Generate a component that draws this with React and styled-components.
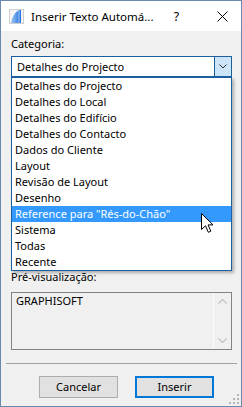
import React from "react";
import styled, { createGlobalStyle } from "styled-components";

const Global = createGlobalStyle`
  html, body { margin: 0; padding: 0; background: #ffffff; }
  body { font-family: "Noto Sans", "Open Sans", sans-serif; font-size: 11px; color: #000; }
  * { box-sizing: border-box; }
`;

const Window = styled.div`
  width: 242px;
  height: 407px;
  border: 1px solid #6b89ad;
  display: flex;
  flex-direction: column;
  position: relative;
  overflow: hidden;
  background: #f0f0f0;
`;

const TitleBar = styled.div`
  height: 30px;
  flex: none;
  background: #ffffff;
  display: flex;
  align-items: center;
`;

const AppIcon = styled.svg`
  margin-left: 8px;
  width: 15px;
  height: 15px;
  flex: none;
`;

const Title = styled.div`
  margin-left: 7px;
  flex: 1;
  font-size: 11.5px;
  white-space: nowrap;
`;

const TitleButton = styled.div`
  width: 46px;
  height: 30px;
  flex: none;
  display: flex;
  align-items: center;
  justify-content: center;
  font-size: 12.5px;
  color: #000;
`;

const Body = styled.div`
  flex: 1;
  position: relative;
  display: flex;
  flex-direction: column;
  padding: 5px 9px 0 10px;
`;

const Label = styled.div`
  line-height: 15px;
  height: 15px;
  margin-top: ${(p) => p.$mt || 0}px;
  white-space: nowrap;
`;

const Combo = styled.div`
  margin-top: 5px;
  height: 21px;
  border: 1px solid #1c5f9e;
  background: #ffffff;
  display: flex;
`;

const ComboText = styled.div`
  flex: 1;
  padding-left: 5px;
  line-height: 19px;
  white-space: nowrap;
`;

const DropButton = styled.div`
  width: 17px;
  flex: none;
  background: #cce4f7;
  border-left: 1px solid #1c5f9e;
  display: flex;
  align-items: center;
  justify-content: center;
`;

const DropList = styled.div`
  position: absolute;
  top: 46px;
  left: 10px;
  width: 221px;
  height: 194px;
  border: 1px solid #1c5f9e;
  background: #ffffff;
  box-shadow: 2px 2px 3px rgba(0, 0, 0, 0.28);
  z-index: 2;
`;

const Item = styled.div`
  height: 16px;
  line-height: 16px;
  padding-left: 3px;
  white-space: nowrap;
  background: ${(p) => (p.$active ? "#3399ff" : "transparent")};
  color: ${(p) => (p.$active ? "#ffffff" : "#000000")};
`;

const Preview = styled.div`
  margin-top: 8px;
  height: 58px;
  border: 1px solid #838383;
  display: flex;
`;

const PreviewText = styled.div`
  flex: 1;
  padding: 0 4px;
  line-height: 15px;
`;

const ScrollBar = styled.div`
  width: 18px;
  flex: none;
  border-left: 1px solid #fbfbfb;
  display: flex;
  flex-direction: column;
  justify-content: space-between;
  align-items: center;
  padding: 6px 0 6px;
`;

const Separator = styled.div`
  margin: 13px -5px 0 -5px;
  height: 1px;
  background: #a0a0a0;
`;

const ButtonRow = styled.div`
  margin-top: 12px;
  padding-left: 28px;
  display: flex;
  gap: 17px;
`;

const Button = styled.div`
  width: 79px;
  height: 22px;
  background: #e1e1e1;
  border: ${(p) => (p.$default ? "2px solid #0078d7" : "1px solid #adadad")};
  display: flex;
  align-items: center;
  justify-content: center;
  line-height: 16px;
`;

const Cursor = styled.svg`
  position: absolute;
  left: 200px;
  top: 212px;
  width: 14px;
  height: 22px;
  z-index: 3;
`;

const Grip = styled.svg`
  position: absolute;
  right: 1px;
  bottom: 1px;
  width: 12px;
  height: 12px;
`;

const items = [
  "Detalhes do Projecto",
  "Detalhes do Local",
  "Detalhes do Edifício",
  "Detalhes do Contacto",
  "Dados do Cliente",
  "Layout",
  "Revisão de Layout",
  "Desenho",
  "Reference para \"Rés-do-Chão\"",
  "Sistema",
  "Todas",
  "Recente",
];

export default function App() {
  return (
    <>
      <Global />
      <Window>
        <TitleBar>
          <AppIcon viewBox="0 0 15 15">
            <defs>
              <linearGradient id="ag" x1="0" y1="0" x2="1" y2="0">
                <stop offset="0" stopColor="#9cc8f5" />
                <stop offset="1" stopColor="#1f6fe0" />
              </linearGradient>
            </defs>
            <rect x="0.5" y="0.5" width="14" height="14" fill="#f4f4f4" stroke="#cfcfcf" />
            <path d="M2 14 C3 8 6 3 10 1 L12 1 L12 14 Z" fill="url(#ag)" />
            <path d="M10 1 L10 14" stroke="#ffffff" strokeWidth="0.8" opacity="0.7" />
          </AppIcon>
          <Title>Inserir Texto Automá...</Title>
          <TitleButton>?</TitleButton>
          <TitleButton>
            <svg width="11" height="11" viewBox="0 0 11 11">
              <path d="M0.5 0.5 L10.5 10.5 M10.5 0.5 L0.5 10.5" stroke="#000" strokeWidth="1" />
            </svg>
          </TitleButton>
        </TitleBar>
        <Body>
          <Label>Categoria:</Label>
          <Combo>
            <ComboText>Detalhes do Projecto</ComboText>
            <DropButton>
              <svg width="8" height="5" viewBox="0 0 8 5">
                <path d="M0.5 0.5 L4 4 L7.5 0.5" stroke="#333" strokeWidth="1" fill="none" />
              </svg>
            </DropButton>
          </Combo>
          <DropList>
            {items.map((t, i) => (
              <Item key={t} $active={i === 8}>{t}</Item>
            ))}
          </DropList>
          <Label $mt={192}>Pré-visualização:</Label>
          <Preview>
            <PreviewText>GRAPHISOFT</PreviewText>
            <ScrollBar>
              <svg width="9" height="5" viewBox="0 0 9 5">
                <path d="M0.5 4.5 L4.5 0.5 L8.5 4.5" stroke="#c2c2c2" strokeWidth="1.2" fill="none" />
              </svg>
              <svg width="9" height="5" viewBox="0 0 9 5">
                <path d="M0.5 0.5 L4.5 4.5 L8.5 0.5" stroke="#c2c2c2" strokeWidth="1.2" fill="none" />
              </svg>
            </ScrollBar>
          </Preview>
          <Separator />
          <ButtonRow>
            <Button>Cancelar</Button>
            <Button $default>Inserir</Button>
          </ButtonRow>
        </Body>
        <Cursor viewBox="0 0 14 22">
          <path
            d="M0.5 0.5 L0.5 16.5 L4.5 12.8 L7.3 19.3 L9.8 18.2 L7.1 11.9 L12 11.9 Z"
            fill="#ffffff"
            stroke="#000000"
            strokeWidth="1"
            strokeLinejoin="miter"
          />
        </Cursor>
        <Grip viewBox="0 0 12 12">
          <rect x="9" y="1" width="2" height="2" fill="#b5b5b5" />
          <rect x="5" y="5" width="2" height="2" fill="#b5b5b5" />
          <rect x="9" y="5" width="2" height="2" fill="#b5b5b5" />
          <rect x="1" y="9" width="2" height="2" fill="#b5b5b5" />
          <rect x="5" y="9" width="2" height="2" fill="#b5b5b5" />
          <rect x="9" y="9" width="2" height="2" fill="#b5b5b5" />
        </Grip>
      </Window>
    </>
  );
}
